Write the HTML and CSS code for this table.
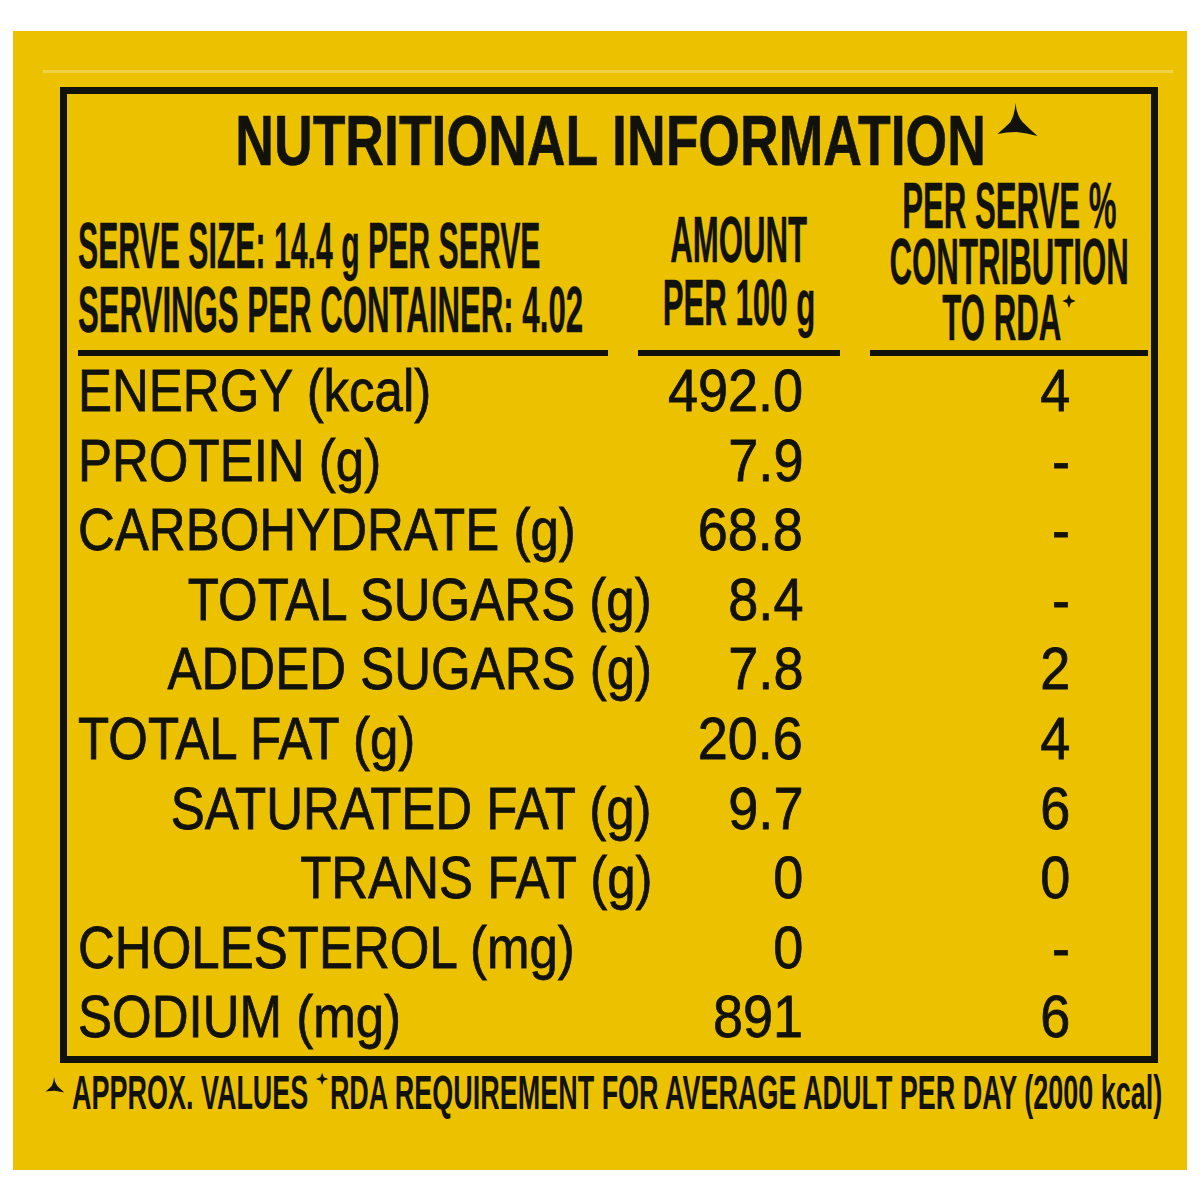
FILE: index.html
```html
<!DOCTYPE html>
<html lang="en">
<head>
<meta charset="utf-8">
<title>Nutritional Information</title>
<link rel="stylesheet" href="styles.css">
</head>
<body>
<div class="panel">
  <div class="gleam"></div>
  <div class="box">
    <div class="title">
      <span class="title-text">NUTRITIONAL INFORMATION</span>
      <svg class="title-mark" viewBox="0 0 40 34" width="41" height="34"><path d="M18 0 Q19 12 25 19 Q32 26 40 33 Q29 30 19 29 Q9 29 0 31 Q7 25 13 19 Q17 12 18 0 Z"/></svg>
    </div>
    <div class="head">
      <div class="hcell hleft">
        <span class="hl hl-size">SERVE SIZE: 14.4 g PER SERVE</span>
        <span class="hl">SERVINGS PER CONTAINER: 4.02</span>
      </div>
      <div class="hcell hmid">
        <span class="hl">AMOUNT</span>
        <span class="hl">PER 100 g</span>
      </div>
      <div class="hcell hright">
        <span class="hl">PER SERVE %</span>
        <span class="hl">CONTRIBUTION</span>
        <span class="hl">TO RDA<svg class="star" viewBox="0 0 10 10" preserveAspectRatio="none"><path d="M5 0 L6.4 3.6 L10 5 L6.4 6.4 L5 10 L3.6 6.4 L0 5 L3.6 3.6 Z"/></svg></span>
      </div>
    </div>
    <div class="rows">
      <div class="lab"><span>ENERGY (kcal)</span></div><div class="amt"><span>492.0</span></div><div class="rda"><span>4</span></div>
      <div class="lab"><span>PROTEIN (g)</span></div><div class="amt"><span>7.9</span></div><div class="rda"><span>-</span></div>
      <div class="lab"><span>CARBOHYDRATE (g)</span></div><div class="amt"><span>68.8</span></div><div class="rda"><span>-</span></div>
      <div class="lab sub"><span>TOTAL SUGARS (g)</span></div><div class="amt"><span>8.4</span></div><div class="rda"><span>-</span></div>
      <div class="lab sub"><span>ADDED SUGARS (g)</span></div><div class="amt"><span>7.8</span></div><div class="rda"><span>2</span></div>
      <div class="lab"><span>TOTAL FAT (g)</span></div><div class="amt"><span>20.6</span></div><div class="rda"><span>4</span></div>
      <div class="lab sub"><span>SATURATED FAT (g)</span></div><div class="amt"><span>9.7</span></div><div class="rda"><span>6</span></div>
      <div class="lab sub"><span>TRANS FAT (g)</span></div><div class="amt"><span>0</span></div><div class="rda"><span>0</span></div>
      <div class="lab"><span>CHOLESTEROL (mg)</span></div><div class="amt"><span>0</span></div><div class="rda"><span>-</span></div>
      <div class="lab"><span>SODIUM (mg)</span></div><div class="amt"><span>891</span></div><div class="rda"><span>6</span></div>
    </div>
  </div>
  <div class="foot">
    <svg class="foot-mark" viewBox="0 0 40 34" width="20" height="16"><path d="M18 0 Q19 12 25 19 Q32 26 40 33 Q29 30 19 29 Q9 29 0 31 Q7 25 13 19 Q17 12 18 0 Z"/></svg>
    <span class="foot-text">APPROX. VALUES <svg class="star fstar" viewBox="0 0 10 10" preserveAspectRatio="none"><path d="M5 0 L6.4 3.6 L10 5 L6.4 6.4 L5 10 L3.6 6.4 L0 5 L3.6 3.6 Z"/></svg>RDA REQUIREMENT FOR AVERAGE ADULT PER DAY (2000 kcal)</span>
  </div>
</div>
</body>
</html>
```
FILE: styles.css
```css
html, body {
  margin: 0;
  padding: 0;
  background: #ffffff;
}

body {
  font-family: "Liberation Sans", Arial, sans-serif;
  color: #12120c;
}

.panel {
  width: 1174px;
  height: 1139px;
  margin: 31px 0 0 13px;
  background: #ecc200;
  display: flex;
  flex-direction: column;
  overflow: hidden;
}

.gleam {
  margin: 39px 0 0 30px;
  width: 1130px;
  height: 3px;
  background: #f1d04a;
  flex: none;
}

.box {
  flex: none;
  margin: 14px 0 0 47px;
  width: 1098px;
  height: 976px;
  box-sizing: border-box;
  border: 7px solid #12120c;
  padding: 12px 3px 0 11px;
  display: flex;
  flex-direction: column;
}

/* Title */
.title {
  position: relative;
  height: 70px;
  line-height: 70px;
  display: flex;
  justify-content: center;
  margin-left: -4px;
  flex: none;
}

.title-text {
  flex: none;
  font-size: 70px;
  font-weight: 700;
  white-space: nowrap;
  transform: scaleX(0.765);
  transform-origin: center;
  -webkit-text-stroke: 0.6px #12120c;
}

.title-mark {
  position: absolute;
  left: 923px;
  top: -3px;
  fill: #12120c;
}

/* Header columns */
.head {
  flex: none;
  height: 180px;
  display: grid;
  grid-template-columns: 530px 202px 278px;
  column-gap: 30px;
}

.hcell {
  display: flex;
  flex-direction: column;
  justify-content: flex-end;
  border-bottom: 6px solid #12120c;
}

.hl {
  flex: none;
  display: block;
  white-space: nowrap;
  font-size: 65px;
  font-weight: 700;
  transform: scaleX(0.48);
  -webkit-text-stroke: 0.4px #12120c;
}

.hleft {
  align-items: flex-start;
  padding-bottom: 8px;
}

.hleft .hl {
  line-height: 64px;
  transform-origin: left center;
}

.hleft .hl-size {
  transform: scaleX(0.465);
}

.hmid {
  align-items: center;
  padding-bottom: 16px;
}

.hmid .hl {
  line-height: 63px;
  transform-origin: center;
}

.hright {
  align-items: center;
  padding-bottom: 4px;
}

.hright .hl {
  line-height: 56px;
  transform-origin: center;
}

.star {
  width: 28px;
  height: 14px;
  fill: #12120c;
  vertical-align: 32px;
  margin-left: 2px;
}

/* Data rows */
.rows {
  flex: none;
  display: grid;
  grid-template-columns: 574px 151px 267px;
  grid-auto-rows: 69.6px;
  font-size: 60px;
  line-height: 69.6px;
}

.lab, .amt, .rda {
  display: flex;
  white-space: nowrap;
}

.lab span, .amt span, .rda span {
  flex: none;
  display: block;
  transform: scaleX(0.85);
  -webkit-text-stroke: 0.8px #12120c;
}

.lab span {
  transform-origin: left center;
}

.lab.sub {
  justify-content: flex-end;
}

.lab.sub span {
  transform-origin: right center;
}

.amt, .rda {
  justify-content: flex-end;
}

.amt span, .rda span {
  transform: scaleX(0.9);
  transform-origin: right center;
}

/* Footnote */
.foot {
  flex: none;
  display: flex;
  align-items: flex-start;
  margin: 6px 0 0 32px;
  height: 48px;
  line-height: 48px;
}

.foot-mark {
  flex: none;
  fill: #12120c;
  margin: 8px 7px 0 0;
}

.foot-text {
  flex: none;
  display: block;
  white-space: nowrap;
  font-size: 48px;
  font-weight: 700;
  transform: scaleX(0.562);
  transform-origin: left center;
}

.fstar {
  width: 22px;
  height: 12px;
  vertical-align: 24px;
  margin: 0 3px 0 0;
}
```
